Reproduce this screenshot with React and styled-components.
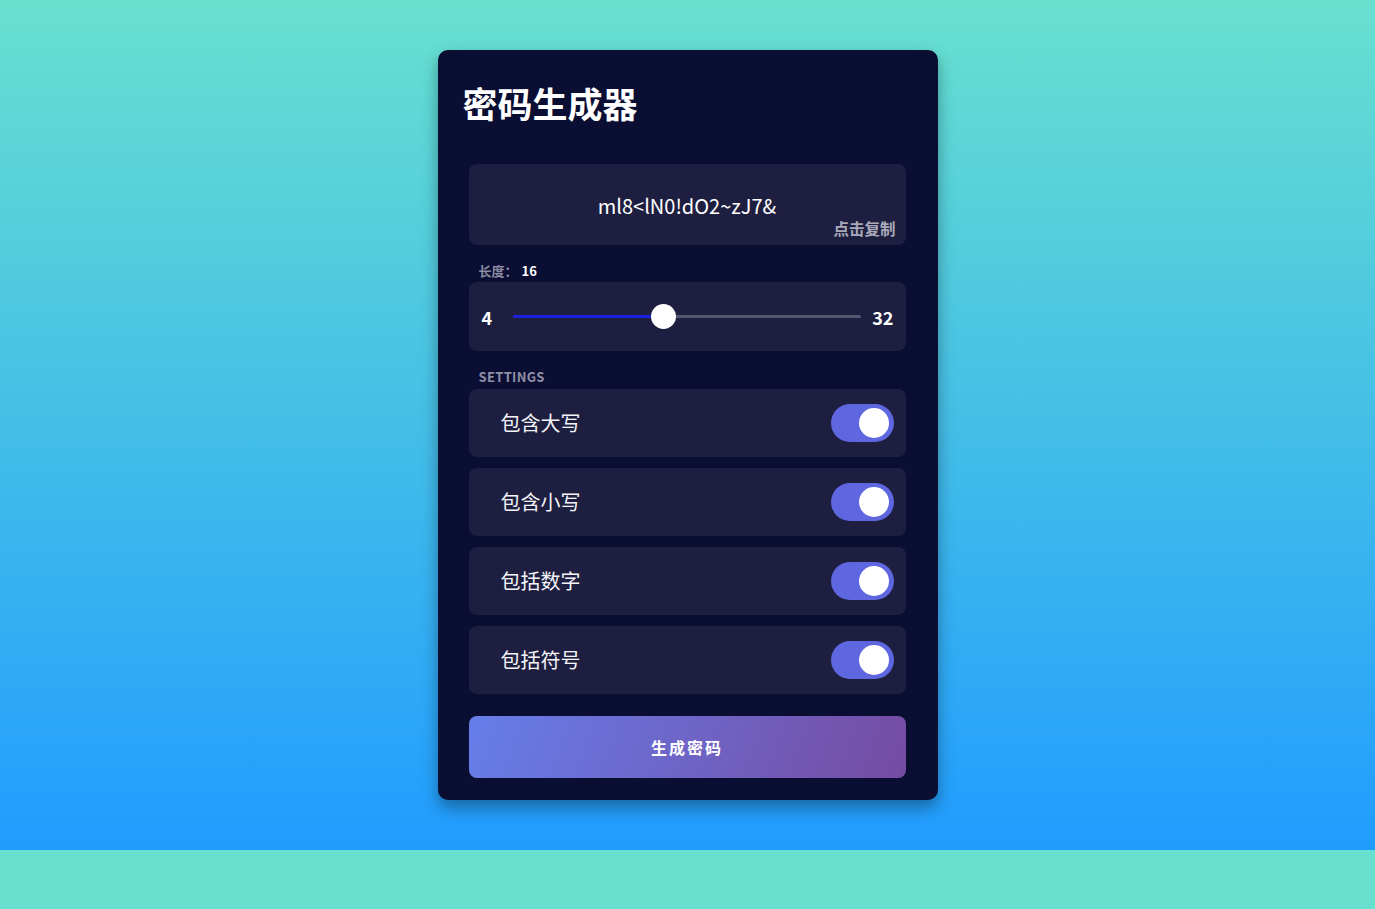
import React, { useState } from 'react';
import styled, { createGlobalStyle } from 'styled-components';

const GlobalStyle = createGlobalStyle`
  * { box-sizing: border-box; }
  body {
    margin: 0;
    background: #68e0cf;
    font-family: "Noto Sans CJK SC", "Noto Sans", sans-serif;
  }
`;

const MIN = 4;
const MAX = 32;

const options = [
  { key: 'upper', label: '包含大写' },
  { key: 'lower', label: '包含小写' },
  { key: 'number', label: '包括数字' },
  { key: 'symbol', label: '包括符号' },
];

const App = () => {
  const [length] = useState(16);
  const [settings, setSettings] = useState({ upper: true, lower: true, number: true, symbol: true });
  const frac = (length - MIN) / (MAX - MIN);

  const toggle = (key) => setSettings({ ...settings, [key]: !settings[key] });

  return (
    <>
      <GlobalStyle />
      <Page>
        <Card>
          <Title>密码生成器</Title>
          <ResultBox>
            <Password>ml8&lt;lN0!dO2~zJ7&amp;</Password>
            <CopyHint>点击复制</CopyHint>
          </ResultBox>

          <FieldLabel>长度：<Value>{length}</Value></FieldLabel>
          <SliderBox>
            <RangeNum>{MIN}</RangeNum>
            <Track>
              <Fill style={{ width: `calc(12.5px + ${frac} * (100% - 25px))` }} />
              <Thumb style={{ left: `calc(${frac} * (100% - 25px))` }} />
            </Track>
            <RangeNum>{MAX}</RangeNum>
          </SliderBox>

          <SectionLabel>Settings</SectionLabel>
          <Settings>
            {options.map(o => (
              <Row key={o.key}>
                <RowLabel>{o.label}</RowLabel>
                <Switch on={settings[o.key] ? 1 : 0} onClick={() => toggle(o.key)}>
                  <Knob on={settings[o.key] ? 1 : 0} />
                </Switch>
              </Row>
            ))}
          </Settings>

          <GenerateButton>生成密码</GenerateButton>
        </Card>
      </Page>
    </>
  );
};

const Page = styled.div`
  height: 850px;
  background: linear-gradient(to bottom, #68e0cf 0%, #209cff 100%);
  display: flex;
  justify-content: center;
  padding-top: 50px;
`
const Card = styled.div`
  width: 500px;
  height: 750px;
  background: #0b0e33;
  border-radius: 10px;
  box-shadow: 0 8px 16px rgba(0, 0, 0, 0.35);
  padding: 27px 32px 22px 31px;
  display: flex;
  flex-direction: column;
`
const Title = styled.h2`
  margin: 0 0 36px -6px;
  color: #fff;
  font-size: 35px;
  font-weight: 700;
  line-height: 51px;
`
const ResultBox = styled.div`
  position: relative;
  height: 81px;
  background: #1e1f40;
  border-radius: 8px;
  display: flex;
  align-items: center;
  justify-content: center;
  padding-top: 3px;
`
const Password = styled.span`
  color: #fff;
  font-size: 20px;
  line-height: 28px;
`
const CopyHint = styled.span`
  position: absolute;
  right: 10px;
  bottom: 7px;
  color: #a9a9ba;
  font-size: 15.5px;
  font-weight: 700;
  line-height: 20px;
`
const FieldLabel = styled.div`
  margin: 17px 0 0 10px;
  height: 20px;
  line-height: 18px;
  color: #8a8ba2;
  font-size: 13px;
  font-weight: 700;
`
const Value = styled.span`
  color: #fff;
  font-size: 13px;
  margin-left: 4px;
`
const SliderBox = styled.div`
  height: 69px;
  background: #1e1f40;
  border-radius: 8px;
  display: flex;
  align-items: center;
  padding: 1px 12px 0 13px;
`
const RangeNum = styled.span`
  color: #fff;
  font-size: 18px;
  font-weight: 700;
  line-height: 24px;
  min-width: 18px;
`
const Track = styled.div`
  position: relative;
  flex: 1;
  height: 3px;
  margin: 0 11px 1px 13px;
  background: #55566f;
  border-radius: 2px;
`
const Fill = styled.div`
  height: 100%;
  background: #1a20dc;
  border-radius: 2px;
`
const Thumb = styled.div`
  position: absolute;
  top: -11px;
  width: 25px;
  height: 25px;
  border-radius: 50%;
  background: #fff;
`
const SectionLabel = styled.div`
  margin: 17px 0 0 10px;
  height: 21px;
  line-height: 18px;
  color: #8f90a7;
  font-size: 13px;
  font-weight: 700;
  text-transform: uppercase;
  letter-spacing: 0.3px;
`
const Settings = styled.div`
  display: flex;
  flex-direction: column;
  gap: 11px;
`
const Row = styled.div`
  height: 68px;
  background: #1e1f40;
  border-radius: 8px;
  display: flex;
  align-items: center;
  justify-content: space-between;
  padding: 0 12px 0 32px;
`
const RowLabel = styled.span`
  color: #f4f4f8;
  font-size: 20px;
  line-height: 28px;
`
const Switch = styled.div`
  position: relative;
  width: 63px;
  height: 38px;
  border-radius: 19px;
  background: ${p => (p.on ? '#5e67e0' : '#44455f')};
  cursor: pointer;
`
const Knob = styled.div`
  position: absolute;
  top: 4px;
  left: ${p => (p.on ? '28px' : '4px')};
  width: 30px;
  height: 30px;
  border-radius: 50%;
  background: #fff;
`
const GenerateButton = styled.button`
  margin-top: 22px;
  height: 62px;
  border: none;
  border-radius: 8px;
  background: linear-gradient(110deg, #667eea 0%, #764ba2 100%);
  color: #fff;
  font-family: inherit;
  font-size: 16px;
  font-weight: 700;
  letter-spacing: 2px;
  cursor: pointer;
`

export default App;
